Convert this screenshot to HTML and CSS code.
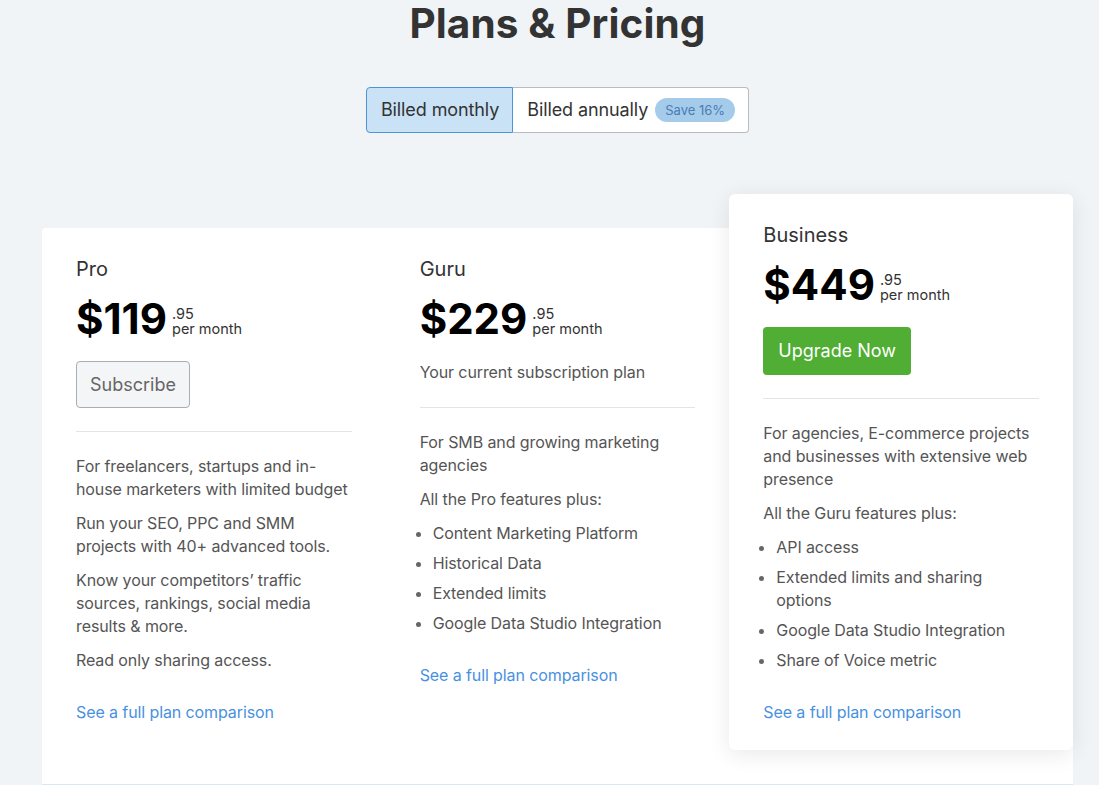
FILE: index.html
```html
<!DOCTYPE html>
<html lang="en">
<head>
<meta charset="utf-8">
<title>Plans &amp; Pricing</title>
<link rel="stylesheet" href="styles.css">
</head>
<body>
<div class="page">
  <h1 class="title">Plans &amp; Pricing</h1>
  <div class="toggle-wrap">
    <div class="toggle">
      <button class="toggle-btn active">Billed monthly</button>
      <button class="toggle-btn">Billed annually <span class="badge">Save 16%</span></button>
    </div>
  </div>
  <div class="plans">
    <div class="plan">
      <div class="plan-name">Pro</div>
      <div class="price"><span class="amount">$119</span><span class="cents">.95<br>per month</span></div>
      <button class="btn btn-subscribe">Subscribe</button>
      <hr class="divider">
      <p class="text">For freelancers, startups and in-house marketers with limited budget</p>
      <p class="text">Run your SEO, PPC and SMM projects with 40+ advanced tools.</p>
      <p class="text">Know your competitors’ traffic sources, rankings, social media results &amp; more.</p>
      <p class="text">Read only sharing access.</p>
      <a class="link" href="#">See a full plan comparison</a>
    </div>
    <div class="plan">
      <div class="plan-name">Guru</div>
      <div class="price"><span class="amount">$229</span><span class="cents">.95<br>per month</span></div>
      <div class="current">Your current subscription plan</div>
      <hr class="divider">
      <p class="text">For SMB and growing marketing agencies</p>
      <p class="text">All the Pro features plus:</p>
      <ul class="features">
        <li>Content Marketing Platform</li>
        <li>Historical Data</li>
        <li>Extended limits</li>
        <li>Google Data Studio Integration</li>
      </ul>
      <a class="link" href="#">See a full plan comparison</a>
    </div>
    <div class="plan plan-featured">
      <div class="plan-name">Business</div>
      <div class="price"><span class="amount">$449</span><span class="cents">.95<br>per month</span></div>
      <button class="btn btn-upgrade">Upgrade Now</button>
      <hr class="divider">
      <p class="text">For agencies, E-commerce projects and businesses with extensive web presence</p>
      <p class="text">All the Guru features plus:</p>
      <ul class="features">
        <li>API access</li>
        <li>Extended limits and sharing options</li>
        <li>Google Data Studio Integration</li>
        <li>Share of Voice metric</li>
      </ul>
      <a class="link" href="#">See a full plan comparison</a>
    </div>
  </div>
</div>
</body>
</html>
```
FILE: styles.css
```css
* { box-sizing: border-box; }
html, body { margin: 0; padding: 0; }
body {
  background: #f0f4f7;
  font-family: Inter, "Noto Sans", sans-serif;
  color: #555;
  overflow: hidden;
  height: 785px;
}
.page {
  margin-left: 42px;
  width: 1031px;
}
.title {
  margin: 0;
  font-size: 40.5px;
  line-height: 48px;
  font-weight: 700;
  color: #333;
  text-align: center;
  letter-spacing: 0.1px;
}
.toggle-wrap {
  display: flex;
  justify-content: center;
  margin-top: 39px;
}
.toggle {
  display: flex;
}
.toggle-btn {
  font-family: inherit;
  font-size: 18px;
  line-height: 24px;
  height: 46px;
  color: #333;
  background: #fff;
  border: 1px solid #b8bcc0;
  padding: 0 13px 0 14px;
  display: flex;
  align-items: center;
  cursor: pointer;
  letter-spacing: -0.1px;
}
.toggle-btn:first-child {
  border-radius: 4px 0 0 4px;
}
.toggle-btn:last-child {
  border-radius: 0 4px 4px 0;
}
.toggle-btn.active {
  background: #c9e2f5;
  border-color: #4c94d6;
}
.toggle-btn.active + .toggle-btn { border-left: none; }
.badge {
  display: inline-block;
  margin-left: 7px;
  background: #a5cbea;
  color: #4a7db4;
  font-size: 13px;
  line-height: 24px;
  height: 24px;
  padding: 0 10px;
  border-radius: 12px;
  letter-spacing: 0;
}
.plans {
  margin-top: 95px;
  display: grid;
  grid-template-columns: repeat(3, 1fr);
  min-height: 557px;
  background: #fff;
  border-radius: 4px 4px 0 0;
  border-bottom: 2px solid #d4e8f8;
}
.plan {
  padding: 27px 34px 26px;
  display: flex;
  flex-direction: column;
  align-items: flex-start;
}
.plan-featured {
  background: #fff;
  margin-top: -34px;
  margin-bottom: 34px;
  border-radius: 6px;
  box-shadow: 0 4px 22px rgba(0, 0, 0, 0.09);
}
.plan-name {
  font-size: 20px;
  line-height: 28px;
  color: #333;
}
.price {
  margin-top: 11px;
  line-height: 50px;
  color: #000;
}
.amount {
  font-size: 42px;
  font-weight: 700;
}
.cents {
  display: inline-block;
  margin-left: 5px;
  font-size: 14.5px;
  line-height: 15px;
  color: #333;
}
.btn {
  margin-top: 8px;
  font-family: inherit;
  font-size: 18px;
  line-height: 24px;
  border-radius: 4px;
  cursor: pointer;
}
.btn-subscribe {
  height: 47px;
  padding: 0 13px;
  color: #666;
  background: #f4f5f6;
  border: 1px solid #a8aeb3;
}
.btn-upgrade {
  height: 48px;
  padding: 0 15px;
  color: #fff;
  background: #4fae33;
  border: none;
}
.current {
  margin-top: 8px;
  font-size: 16px;
  line-height: 23px;
  color: #555;
  letter-spacing: -0.1px;
}
.divider {
  align-self: stretch;
  margin: 23px 0 0;
  border: none;
  border-top: 1px solid #e2e4e6;
  height: 0;
}
.text {
  margin: 23px 0 0;
  font-size: 16px;
  line-height: 23px;
  letter-spacing: -0.1px;
}
.text + .text { margin-top: 11px; }
.features {
  margin: 11px 0 0;
  padding-left: 13px;
  font-size: 16px;
  line-height: 23px;
  letter-spacing: -0.1px;
}
.features li { margin-top: 7px; }
.features li:first-child { margin-top: 0; }
.features li::marker { color: #666; }
.link {
  margin-top: 29px;
  font-size: 16px;
  line-height: 23px;
  color: #4891df;
  text-decoration: none;
  letter-spacing: -0.1px;
}
```
